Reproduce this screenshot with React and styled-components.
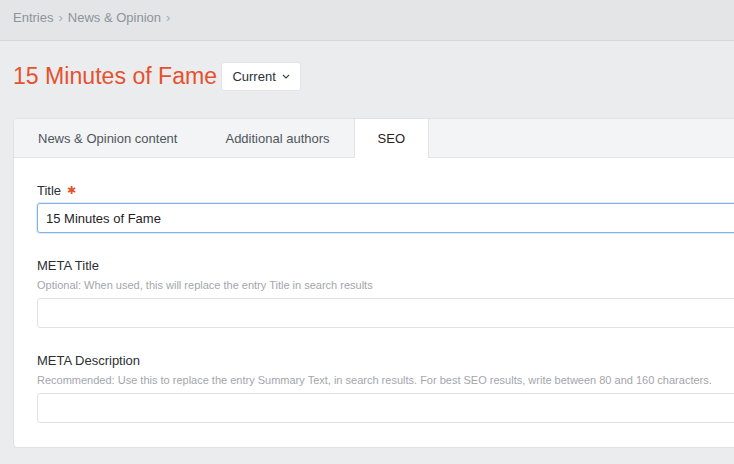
import React from 'react'
import styled, { createGlobalStyle } from 'styled-components'

const GlobalStyle = createGlobalStyle`
  html, body {
    margin: 0;
    padding: 0;
    background: #ebecee;
    overflow: hidden;
  }
  body {
    font-family: "Liberation Sans", Arial, sans-serif;
    -webkit-font-smoothing: antialiased;
  }
`

const Page = styled.div`
  width: 100%;
  height: 464px;
  overflow: hidden;
`

const Header = styled.header`
  height: 40px;
  background: #e4e5e7;
  border-bottom: 1px solid #d7d8da;
  display: flex;
  align-items: center;
  padding: 0 13px;
  box-sizing: content-box;
`

const Crumbs = styled.nav`
  display: flex;
  align-items: center;
  gap: 5px;
  font-size: 13px;
  color: #8d939a;
  margin-top: -6px;
`

const Sep = styled.span`
  color: #a7acb1;
  font-size: 13px;
`

const TitleRow = styled.div`
  display: flex;
  align-items: center;
  gap: 4px;
  padding: 21px 13px 27px;
`

const PageTitle = styled.h1`
  margin: 0;
  font-size: 23.1px;
  font-weight: 400;
  color: #e4522e;
`

const VersionButton = styled.button`
  height: 29px;
  width: 80px;
  display: flex;
  align-items: center;
  justify-content: center;
  gap: 6px;
  background: #fff;
  border: 1px solid #e3e4e6;
  border-radius: 3px;
  font-family: inherit;
  font-size: 13px;
  color: #29323a;
  padding: 0;
`

const Panel = styled.section`
  margin-left: 13px;
  width: 760px;
  background: #fff;
  border: 1px solid #e0e1e3;
  border-radius: 4px;
  overflow: hidden;
`

const Tabs = styled.div`
  display: flex;
  height: 38px;
  background: #f3f4f5;
  border-bottom: 1px solid #e2e3e5;
`

const Tab = styled.div`
  display: flex;
  align-items: center;
  padding: 0 23px;
  font-size: 13px;
  color: ${p => (p.$active ? '#1f2326' : '#4f565c')};
  background: ${p => (p.$active ? '#fff' : 'transparent')};
  border-left: 1px solid ${p => (p.$active ? '#e2e3e5' : 'transparent')};
  border-right: 1px solid ${p => (p.$active ? '#e2e3e5' : 'transparent')};
  margin-bottom: ${p => (p.$active ? '-1px' : '0')};
`

const Form = styled.div`
  display: flex;
  flex-direction: column;
  gap: 24px;
  padding: 24px 0 24px 23px;
`

const Field = styled.div`
  display: flex;
  flex-direction: column;
`

const Label = styled.label`
  font-size: 13px;
  line-height: 18px;
  color: #2b3035;
  margin-bottom: 3px;
`

const Required = styled.span`
  color: #e4522e;
  font-size: 11px;
  margin-left: 6px;
  position: relative;
  top: -1px;
`

const Hint = styled.div`
  font-size: 11px;
  line-height: 14px;
  color: #a2a6ab;
  margin: 0 0 6px;
`

const Input = styled.input`
  height: 30px;
  box-sizing: border-box;
  width: 740px;
  border: 1px solid ${p => (p.$focused ? '#80b1e9' : '#e1e2e4')};
  box-shadow: ${p => (p.$focused ? '0 0 0 1px rgba(128,177,233,0.25)' : 'none')};
  border-radius: 3px;
  padding: 0 8px;
  font-family: inherit;
  font-size: 13px;
  color: #1f2326;
  outline: none;
  background: #fff;
`

const Chevron = () => (
  <svg width="8" height="5" viewBox="0 0 8 5" fill="none">
    <path d="M1 1l3 3 3-3" stroke="#3a4148" strokeWidth="1.1" />
  </svg>
)

export default function App() {
  return (
    <Page>
      <GlobalStyle />
      <Header>
        <Crumbs>
          <span>Entries</span>
          <Sep>›</Sep>
          <span>News &amp; Opinion</span>
          <Sep>›</Sep>
        </Crumbs>
      </Header>
      <TitleRow>
        <PageTitle>15 Minutes of Fame</PageTitle>
        <VersionButton>
          Current <Chevron />
        </VersionButton>
      </TitleRow>
      <Panel>
        <Tabs>
          <Tab>News &amp; Opinion content</Tab>
          <Tab>Additional authors</Tab>
          <Tab $active>SEO</Tab>
        </Tabs>
        <Form>
          <Field>
            <Label>
              Title<Required>✱</Required>
            </Label>
            <Input $focused defaultValue="15 Minutes of Fame" />
          </Field>
          <Field>
            <Label>META Title</Label>
            <Hint>Optional: When used, this will replace the entry Title in search results</Hint>
            <Input />
          </Field>
          <Field>
            <Label>META Description</Label>
            <Hint>
              Recommended: Use this to replace the entry Summary Text, in search results. For best SEO
              results, write between 80 and 160 characters.
            </Hint>
            <Input />
          </Field>
        </Form>
      </Panel>
    </Page>
  )
}
